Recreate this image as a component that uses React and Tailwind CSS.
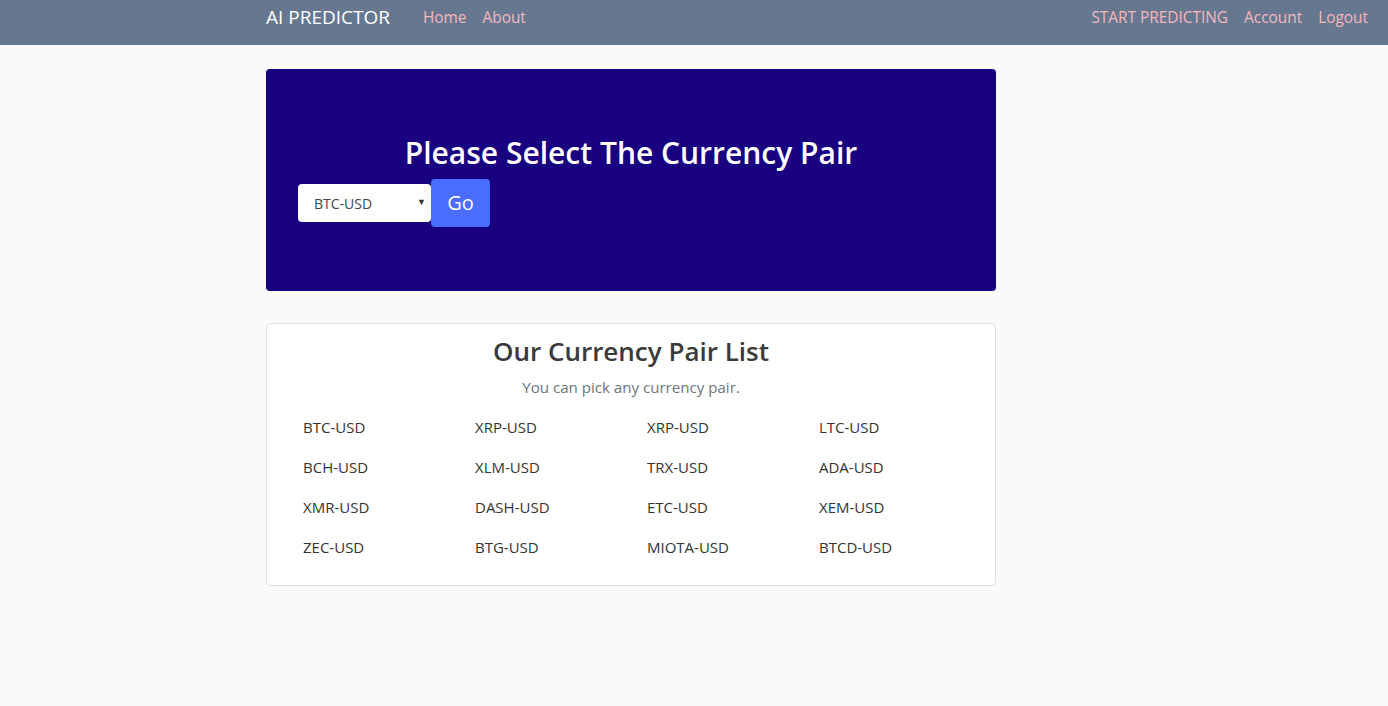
import { useState } from 'react';

const pairs = [
  'BTC-USD', 'XRP-USD', 'XRP-USD', 'LTC-USD',
  'BCH-USD', 'XLM-USD', 'TRX-USD', 'ADA-USD',
  'XMR-USD', 'DASH-USD', 'ETC-USD', 'XEM-USD',
  'ZEC-USD', 'BTG-USD', 'MIOTA-USD', 'BTCD-USD',
];

export default function App() {
  const [pair, setPair] = useState('BTC-USD');

  return (
    <div className="min-h-screen bg-[#fafafa] font-['Open_Sans',sans-serif]">
      {/* Navbar */}
      <nav className="h-[45px] bg-[#667890] flex items-center pl-[266px] pr-[20px] pb-[10px]">
        <span className="text-[19px] text-white mr-[33px]">AI PREDICTOR</span>
        <div className="flex gap-[16px] text-[15.4px] text-[#f5b6be]">
          <a href="#">Home</a>
          <a href="#">About</a>
        </div>
        <div className="ml-auto flex gap-[16px] text-[15.4px] text-[#f5b6be]">
          <a href="#">START PREDICTING</a>
          <a href="#">Account</a>
          <a href="#">Logout</a>
        </div>
      </nav>

      <main className="ml-[266px] w-[730px] pt-[24px]">
        {/* Jumbotron */}
        <div className="h-[222px] rounded-[4px] bg-[#190080] pt-[64px] px-[32px]">
          <h2 className="text-center text-white text-[30px] leading-[40px] font-semibold">
            Please Select The Currency Pair
          </h2>
          <div className="flex items-center mt-[6px]">
            <div className="relative">
              <select
                value={pair}
                onChange={(e) => setPair(e.target.value)}
                className="appearance-none w-[133px] h-[38px] bg-white rounded-[4px] pl-[16px] text-[14px] text-[#444]"
              >
                {pairs.map((p, i) => (
                  <option key={i} value={p}>{p}</option>
                ))}
              </select>
              <span className="absolute right-[5px] top-[11px] text-[9px] text-[#333] pointer-events-none">▼</span>
            </div>
            <button className="w-[59px] h-[48px] rounded-[4px] bg-[#4a6cff] text-white text-[20px]">Go</button>
          </div>
        </div>

        {/* Pair list */}
        <div className="mt-[32px] bg-white border border-[#dfdfdf] rounded-[4px] pt-[9px] pb-[18px] px-[36px]">
          <h3 className="text-center text-[26px] leading-[36px] font-semibold text-[#3a3a3a]">Our Currency Pair List</h3>
          <p className="text-center text-[15.1px] leading-[24px] text-[#6c757d] mt-[6px]">You can pick any currency pair.</p>
          <div className="grid grid-cols-[172px_172px_172px_172px] mt-[8px]">
            {pairs.map((p, i) => (
              <div key={i} className="h-[40px] flex items-center text-[15px] text-[#333]">{p}</div>
            ))}
          </div>
        </div>
      </main>
    </div>
  );
}
